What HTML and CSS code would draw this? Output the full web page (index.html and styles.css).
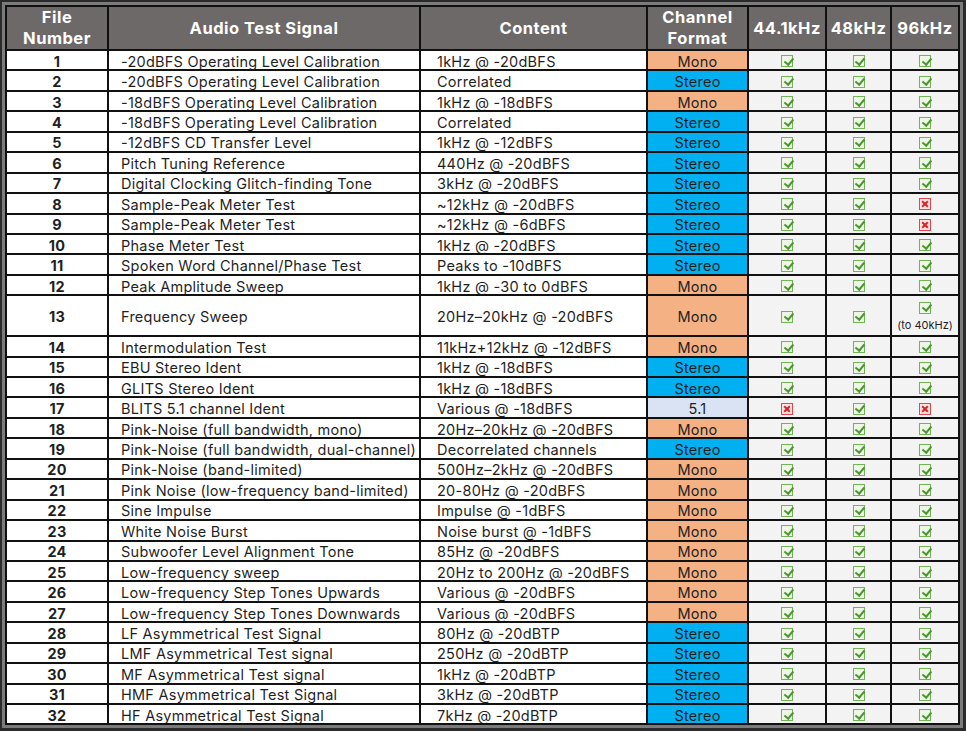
FILE: index.html
```html
<!DOCTYPE html>
<html>
<head>
<meta charset="utf-8">
<link rel="stylesheet" href="styles.css">
</head>
<body>
<div class="frame">
<table class="grid">
<colgroup>
<col class="c-num"><col class="c-sig"><col class="c-con"><col class="c-fmt"><col class="c-r1"><col class="c-r2"><col class="c-r3">
</colgroup>
<thead>
<tr class="head">
<th>File<br>Number</th><th>Audio Test Signal</th><th>Content</th><th>Channel<br>Format</th><th>44.1kHz</th><th>48kHz</th><th>96kHz</th>
</tr>
</thead>
<tbody>
<tr><td class="num">1</td><td class="sig">-20dBFS Operating Level Calibration</td><td class="con">1kHz @ -20dBFS</td><td class="fmt mono">Mono</td><td class="rate"><span class="ck"></span></td><td class="rate"><span class="ck"></span></td><td class="rate"><span class="ck"></span></td></tr>
<tr><td class="num">2</td><td class="sig">-20dBFS Operating Level Calibration</td><td class="con">Correlated</td><td class="fmt stereo">Stereo</td><td class="rate"><span class="ck"></span></td><td class="rate"><span class="ck"></span></td><td class="rate"><span class="ck"></span></td></tr>
<tr><td class="num">3</td><td class="sig">-18dBFS Operating Level Calibration</td><td class="con">1kHz @ -18dBFS</td><td class="fmt mono">Mono</td><td class="rate"><span class="ck"></span></td><td class="rate"><span class="ck"></span></td><td class="rate"><span class="ck"></span></td></tr>
<tr><td class="num">4</td><td class="sig">-18dBFS Operating Level Calibration</td><td class="con">Correlated</td><td class="fmt stereo">Stereo</td><td class="rate"><span class="ck"></span></td><td class="rate"><span class="ck"></span></td><td class="rate"><span class="ck"></span></td></tr>
<tr><td class="num">5</td><td class="sig">-12dBFS CD Transfer Level</td><td class="con">1kHz @ -12dBFS</td><td class="fmt stereo">Stereo</td><td class="rate"><span class="ck"></span></td><td class="rate"><span class="ck"></span></td><td class="rate"><span class="ck"></span></td></tr>
<tr><td class="num">6</td><td class="sig">Pitch Tuning Reference</td><td class="con">440Hz @ -20dBFS</td><td class="fmt stereo">Stereo</td><td class="rate"><span class="ck"></span></td><td class="rate"><span class="ck"></span></td><td class="rate"><span class="ck"></span></td></tr>
<tr><td class="num">7</td><td class="sig">Digital Clocking Glitch-finding Tone</td><td class="con">3kHz @ -20dBFS</td><td class="fmt stereo">Stereo</td><td class="rate"><span class="ck"></span></td><td class="rate"><span class="ck"></span></td><td class="rate"><span class="ck"></span></td></tr>
<tr><td class="num">8</td><td class="sig">Sample-Peak Meter Test</td><td class="con">~12kHz @ -20dBFS</td><td class="fmt stereo">Stereo</td><td class="rate"><span class="ck"></span></td><td class="rate"><span class="ck"></span></td><td class="rate"><span class="no"></span></td></tr>
<tr><td class="num">9</td><td class="sig">Sample-Peak Meter Test</td><td class="con">~12kHz @ -6dBFS</td><td class="fmt stereo">Stereo</td><td class="rate"><span class="ck"></span></td><td class="rate"><span class="ck"></span></td><td class="rate"><span class="no"></span></td></tr>
<tr><td class="num">10</td><td class="sig">Phase Meter Test</td><td class="con">1kHz @ -20dBFS</td><td class="fmt stereo">Stereo</td><td class="rate"><span class="ck"></span></td><td class="rate"><span class="ck"></span></td><td class="rate"><span class="ck"></span></td></tr>
<tr><td class="num">11</td><td class="sig">Spoken Word Channel/Phase Test</td><td class="con">Peaks to -10dBFS</td><td class="fmt stereo">Stereo</td><td class="rate"><span class="ck"></span></td><td class="rate"><span class="ck"></span></td><td class="rate"><span class="ck"></span></td></tr>
<tr><td class="num">12</td><td class="sig">Peak Amplitude Sweep</td><td class="con">1kHz @ -30 to 0dBFS</td><td class="fmt mono">Mono</td><td class="rate"><span class="ck"></span></td><td class="rate"><span class="ck"></span></td><td class="rate"><span class="ck"></span></td></tr>
<tr class="tall"><td class="num">13</td><td class="sig">Frequency Sweep</td><td class="con">20Hz–20kHz @ -20dBFS</td><td class="fmt mono">Mono</td><td class="rate"><span class="ck"></span></td><td class="rate"><span class="ck"></span></td><td class="rate"><span class="ck"></span><span class="note">(to 40kHz)</span></td></tr>
<tr><td class="num">14</td><td class="sig">Intermodulation Test</td><td class="con">11kHz+12kHz @ -12dBFS</td><td class="fmt mono">Mono</td><td class="rate"><span class="ck"></span></td><td class="rate"><span class="ck"></span></td><td class="rate"><span class="ck"></span></td></tr>
<tr><td class="num">15</td><td class="sig">EBU Stereo Ident</td><td class="con">1kHz @ -18dBFS</td><td class="fmt stereo">Stereo</td><td class="rate"><span class="ck"></span></td><td class="rate"><span class="ck"></span></td><td class="rate"><span class="ck"></span></td></tr>
<tr><td class="num">16</td><td class="sig">GLITS Stereo Ident</td><td class="con">1kHz @ -18dBFS</td><td class="fmt stereo">Stereo</td><td class="rate"><span class="ck"></span></td><td class="rate"><span class="ck"></span></td><td class="rate"><span class="ck"></span></td></tr>
<tr><td class="num">17</td><td class="sig">BLITS 5.1 channel Ident</td><td class="con">Various @ -18dBFS</td><td class="fmt surround">5.1</td><td class="rate"><span class="no"></span></td><td class="rate"><span class="ck"></span></td><td class="rate"><span class="no"></span></td></tr>
<tr><td class="num">18</td><td class="sig">Pink-Noise (full bandwidth, mono)</td><td class="con">20Hz–20kHz @ -20dBFS</td><td class="fmt mono">Mono</td><td class="rate"><span class="ck"></span></td><td class="rate"><span class="ck"></span></td><td class="rate"><span class="ck"></span></td></tr>
<tr><td class="num">19</td><td class="sig">Pink-Noise (full bandwidth, dual-channel)</td><td class="con">Decorrelated channels</td><td class="fmt stereo">Stereo</td><td class="rate"><span class="ck"></span></td><td class="rate"><span class="ck"></span></td><td class="rate"><span class="ck"></span></td></tr>
<tr><td class="num">20</td><td class="sig">Pink-Noise (band-limited)</td><td class="con">500Hz–2kHz @ -20dBFS</td><td class="fmt mono">Mono</td><td class="rate"><span class="ck"></span></td><td class="rate"><span class="ck"></span></td><td class="rate"><span class="ck"></span></td></tr>
<tr><td class="num">21</td><td class="sig">Pink Noise (low-frequency band-limited)</td><td class="con">20-80Hz @ -20dBFS</td><td class="fmt mono">Mono</td><td class="rate"><span class="ck"></span></td><td class="rate"><span class="ck"></span></td><td class="rate"><span class="ck"></span></td></tr>
<tr><td class="num">22</td><td class="sig">Sine Impulse</td><td class="con">Impulse @ -1dBFS</td><td class="fmt mono">Mono</td><td class="rate"><span class="ck"></span></td><td class="rate"><span class="ck"></span></td><td class="rate"><span class="ck"></span></td></tr>
<tr><td class="num">23</td><td class="sig">White Noise Burst</td><td class="con">Noise burst @ -1dBFS</td><td class="fmt mono">Mono</td><td class="rate"><span class="ck"></span></td><td class="rate"><span class="ck"></span></td><td class="rate"><span class="ck"></span></td></tr>
<tr><td class="num">24</td><td class="sig">Subwoofer Level Alignment Tone</td><td class="con">85Hz @ -20dBFS</td><td class="fmt mono">Mono</td><td class="rate"><span class="ck"></span></td><td class="rate"><span class="ck"></span></td><td class="rate"><span class="ck"></span></td></tr>
<tr><td class="num">25</td><td class="sig">Low-frequency sweep</td><td class="con">20Hz to 200Hz @ -20dBFS</td><td class="fmt mono">Mono</td><td class="rate"><span class="ck"></span></td><td class="rate"><span class="ck"></span></td><td class="rate"><span class="ck"></span></td></tr>
<tr><td class="num">26</td><td class="sig">Low-frequency Step Tones Upwards</td><td class="con">Various @ -20dBFS</td><td class="fmt mono">Mono</td><td class="rate"><span class="ck"></span></td><td class="rate"><span class="ck"></span></td><td class="rate"><span class="ck"></span></td></tr>
<tr><td class="num">27</td><td class="sig">Low-frequency Step Tones Downwards</td><td class="con">Various @ -20dBFS</td><td class="fmt mono">Mono</td><td class="rate"><span class="ck"></span></td><td class="rate"><span class="ck"></span></td><td class="rate"><span class="ck"></span></td></tr>
<tr><td class="num">28</td><td class="sig">LF Asymmetrical Test Signal</td><td class="con">80Hz @ -20dBTP</td><td class="fmt stereo">Stereo</td><td class="rate"><span class="ck"></span></td><td class="rate"><span class="ck"></span></td><td class="rate"><span class="ck"></span></td></tr>
<tr><td class="num">29</td><td class="sig">LMF Asymmetrical Test signal</td><td class="con">250Hz @ -20dBTP</td><td class="fmt stereo">Stereo</td><td class="rate"><span class="ck"></span></td><td class="rate"><span class="ck"></span></td><td class="rate"><span class="ck"></span></td></tr>
<tr><td class="num">30</td><td class="sig">MF Asymmetrical Test signal</td><td class="con">1kHz @ -20dBTP</td><td class="fmt stereo">Stereo</td><td class="rate"><span class="ck"></span></td><td class="rate"><span class="ck"></span></td><td class="rate"><span class="ck"></span></td></tr>
<tr><td class="num">31</td><td class="sig">HMF Asymmetrical Test Signal</td><td class="con">3kHz @ -20dBTP</td><td class="fmt stereo">Stereo</td><td class="rate"><span class="ck"></span></td><td class="rate"><span class="ck"></span></td><td class="rate"><span class="ck"></span></td></tr>
<tr><td class="num">32</td><td class="sig">HF Asymmetrical Test Signal</td><td class="con">7kHz @ -20dBTP</td><td class="fmt stereo">Stereo</td><td class="rate"><span class="ck"></span></td><td class="rate"><span class="ck"></span></td><td class="rate"><span class="ck"></span></td></tr>
</tbody>
</table>
</div>
</body>
</html>
```
FILE: styles.css
```css
html, body {
  margin: 0;
  padding: 0;
}
body {
  background: #2b2b2b;
  padding: 2px 3px 2px 2px;
  width: 966px;
  height: 731px;
  box-sizing: border-box;
  font-family: "Inter", "Lato", "Liberation Sans", sans-serif;
  color: #1f1f1f;
}
.frame {
  background: #7b7b7b;
  padding: 3px 3px 3px 3px;
  width: fit-content;
}
.grid {
  border-collapse: collapse;
  table-layout: fixed;
  width: 955px;
  border: 2px solid #111;
}
.c-num { width: 102px; }
.c-sig { width: 312px; }
.c-con { width: 227px; }
.c-fmt { width: 101px; }
.c-r1 { width: 78px; }
.c-r2 { width: 65px; }
.c-r3 { width: 68px; }

.grid th, .grid td {
  border: 2px solid #111;
  padding: 0;
  white-space: nowrap;
  overflow: hidden;
}
.head {
  height: 44px;
}
.head th {
  background: #6d6969;
  color: #fff;
  font-weight: 700;
  font-size: 16.5px;
  letter-spacing: 0.5px;
  line-height: 21px;
  text-align: center;
  vertical-align: middle;
}
.grid tbody tr {
  height: 20.45px;
}
.grid tbody tr.tall {
  height: 40.9px;
}
.grid td {
  font-size: 14.5px;
  letter-spacing: 0.25px;
  line-height: 14px;
  padding-top: 3px;
  vertical-align: middle;
  background: #fff;
}
.num {
  text-align: center;
  font-weight: 700;
  letter-spacing: 0.2px;
}
.sig {
  padding-left: 12px !important;
}
.con {
  padding-left: 16px !important;
}
.fmt {
  text-align: center;
}
.mono { background: #f4b183 !important; }
.stereo { background: #00b0f0 !important; }
.surround { background: #dae3f3 !important; }
.rate {
  background: #f3f3f3 !important;
  text-align: center;
  padding-top: 0 !important;
}
.ck, .no {
  display: inline-block;
  position: relative;
  width: 10px;
  height: 10px;
  vertical-align: middle;
  border: 1.5px solid #74b257;
  background: #eef6e6;
}
.ck::after {
  content: "";
  position: absolute;
  left: 3.5px;
  top: -0.5px;
  width: 3.5px;
  height: 7px;
  border-right: 2.2px solid #4a9630;
  border-bottom: 2.2px solid #4a9630;
  transform: rotate(40deg);
}
.no {
  border-color: #e2474b;
  background: #fbe3e3;
}
.no::before, .no::after {
  content: "";
  position: absolute;
  left: 1px;
  top: 4px;
  width: 8px;
  height: 2px;
  background: #d9262b;
  transform: rotate(45deg);
}
.no::after {
  transform: rotate(-45deg);
}
.note {
  display: block;
  font-size: 11px;
  letter-spacing: 0;
  line-height: 13px;
  margin-top: 5px;
}
```
